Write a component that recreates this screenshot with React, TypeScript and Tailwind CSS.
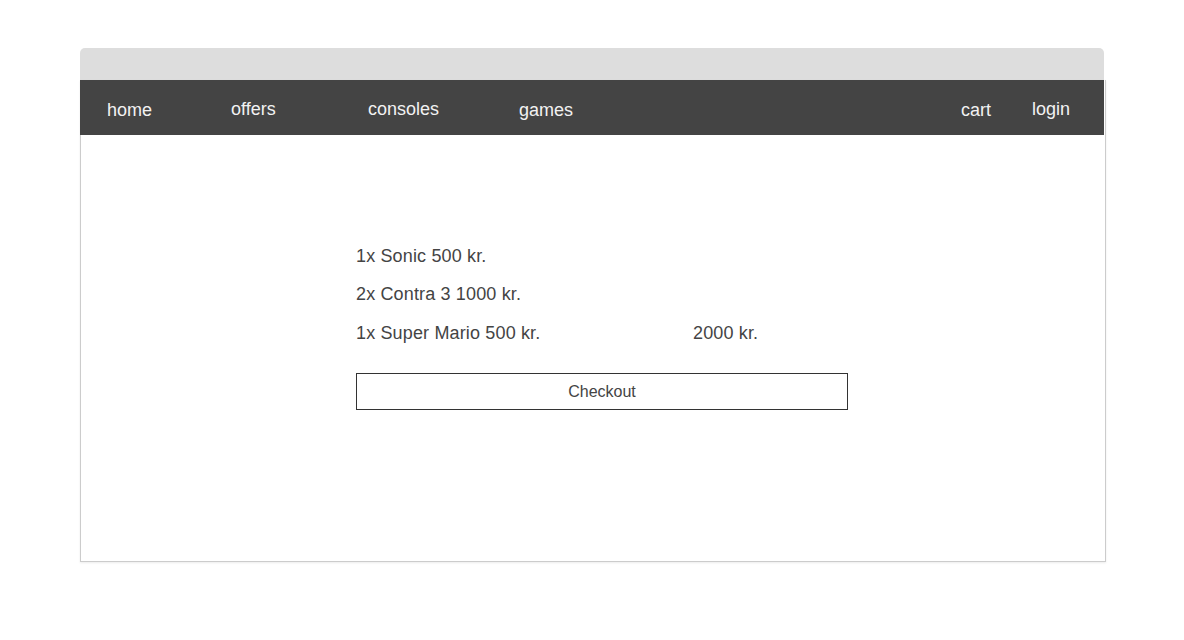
import React from "react";

export default function App() {
  return (
    <div className="min-h-[640px] w-[1184px] bg-white pt-12 pl-20" style={{ fontFamily: '"Liberation Sans", Arial, sans-serif' }}>
      <div className="h-8 w-[1024px] rounded-t-[5px] bg-[#dddddd]" />
      <div className="h-[482px] w-[1026px] border border-t-0 border-[#cccccc] shadow-[0_1px_2px_rgba(0,0,0,0.08)]">
        <nav className="-ml-px flex h-[55px] w-[1024px] items-center bg-[#444444] pl-[27px] pr-[34px] pt-[4px] text-[18px] text-[#f2f2f2]">
          <span className="mt-[2px] w-[124px]">home</span>
          <span className="w-[137px]">offers</span>
          <span className="w-[151px]">consoles</span>
          <span className="mt-[2px]">games</span>
          <span className="ml-auto mt-[2px] w-[71px]">cart</span>
          <span>login</span>
        </nav>
        <div className="pl-[275px] pt-[102px] text-[18px] tracking-[0.15px] text-[#444444]">
          <div className="h-[38px] leading-[38px]">1x Sonic 500 kr.</div>
          <div className="h-[39px] leading-[39px]">2x Contra 3 1000 kr.</div>
          <div className="flex h-[39px] leading-[39px]">
            <span className="w-[337px]">1x Super Mario 500 kr.</span>
            <span>2000 kr.</span>
          </div>
          <button className="mt-[20px] flex h-[37px] w-[492px] items-center justify-center border border-[#333333] bg-white text-[16px] tracking-normal text-[#444444]">
            Checkout
          </button>
        </div>
      </div>
    </div>
  );
}
